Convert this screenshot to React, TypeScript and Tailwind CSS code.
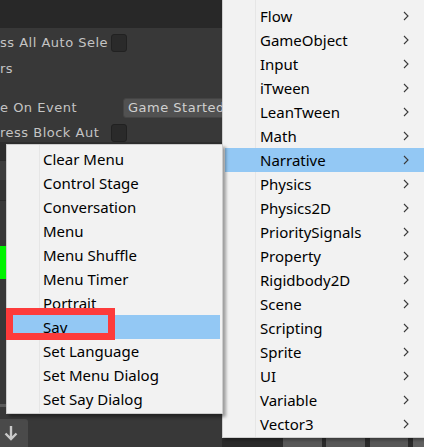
import React from "react";

const rightItems = [
  "Flow","GameObject","Input","iTween","LeanTween","Math","Narrative","Physics","Physics2D",
  "PrioritySignals","Property","Rigidbody2D","Scene","Scripting","Sprite","UI","Variable","Vector3",
];
const leftItems = [
  "Clear Menu","Control Stage","Conversation","Menu","Menu Shuffle","Menu Timer","Portrait","Say",
  "Set Language","Set Menu Dialog","Set Say Dialog",
];

const Chevron = () => (
  <svg width="6" height="10" viewBox="0 0 6 10" className="shrink-0">
    <path d="M1 1 L5 5 L1 9" fill="none" stroke="#3a3a3a" strokeWidth="1.1" />
  </svg>
);

const Checkbox = () => (
  <div className="w-[16px] h-[18px] rounded-[3px] bg-[#2a2a2a] border border-[#212121]" />
);

export default function App() {
  const bgFont = { fontFamily: '"DejaVu Sans", Verdana, sans-serif' };
  const menuFont = { fontFamily: '"Noto Sans", "Noto Sans CJK SC", sans-serif' };
  return (
    <div className="relative w-[424px] h-[447px] overflow-hidden bg-[#383838]">
      {/* background inspector */}
      <div className="flex flex-col text-[13px] tracking-[0.5px] text-[#c4c4c4]" style={bgFont}>
        <div className="h-[28px] bg-[#282828]" />
        <div className="flex items-center h-[18px] mt-[6px] whitespace-nowrap">
          <span className="w-[111px]">ss All Auto Sele</span>
          <Checkbox />
        </div>
        <div className="flex items-center h-[18px] mt-[8px]">
          <span>rs</span>
        </div>
        <div className="flex items-center h-[20px] mt-[20px] whitespace-nowrap">
          <span className="w-[123px]">e On Event</span>
          <div className="w-[110px] h-[20px] rounded-[3px] bg-[#515151] border border-[#444] flex items-center pl-[4px] text-[#d0d0d0]">
            Game Started
          </div>
        </div>
        <div className="flex items-center h-[18px] mt-[6px] whitespace-nowrap">
          <span className="w-[111px]">ress Block Aut</span>
          <Checkbox />
        </div>
        {/* left strip pieces (mostly hidden under menu) */}
        <div className="h-[18px] bg-[#2e2e2e]" />
        <div className="h-[20px] bg-[#3c3c3c] border-t border-[#2a2a2a]" />
        <div className="h-[20px] bg-[#353535]" />
        <div className="h-[22px] bg-[#383838] border-t border-[#2a2a2a]" />
        <div className="h-[24px]" />
        <div className="h-[33px] w-[60px] bg-[#00f400]" />
        <div className="h-[125px]" />
        <div className="h-[3px] bg-[#5a5a5a]" />
        <div className="h-[12px]" />
        <div className="flex">
          <div className="w-[34px] h-[28px] -ml-[6px] bg-[#4a4a4a] rounded-tr-[3px] flex items-center justify-center">
            <svg width="16" height="18" viewBox="0 0 16 18">
              <path d="M8 2 V15 M2.5 9.5 L8 15 L13.5 9.5" fill="none" stroke="#c9c9c9" strokeWidth="2.4" />
            </svg>
          </div>
        </div>
      </div>

      {/* bottom right toolbar under right menu */}
      <div className="absolute left-[222px] bottom-0 h-[10px] w-[202px] flex bg-[#2b2b2b]">
        <div className="w-[61px]" />
        <div className="w-[39px] bg-[#585858]" />
        <div className="w-[4px]" />
        <div className="w-[39px] bg-[#585858]" />
        <div className="w-[5px]" />
        <div className="w-[38px] bg-[#585858]" />
        <div className="w-[5px]" />
        <div className="flex-1 bg-[#606060]" />
      </div>

      {/* right menu */}
      <div
        className="absolute left-[222px] top-0 w-[204px] h-[438px] bg-[#f2f2f2] border-l border-b border-[#cfcfcf] pt-[4px] shadow-[2px_2px_3px_rgba(0,0,0,0.35)]"
        style={menuFont}
      >
        <div className="absolute left-[32px] top-0 bottom-0 w-px bg-[#e6e6e6]" />
        {rightItems.map((t) => (
          <div
            key={t}
            className={`relative flex items-center h-[24px] mx-[2px] pl-[35px] pr-[15px] text-[15px] text-black ${
              t === "Narrative" ? "bg-[#93c8f4]" : ""
            }`}
          >
            <span className="flex-1 leading-none">{t}</span>
            <Chevron />
          </div>
        ))}
      </div>

      {/* left menu */}
      <div
        className="absolute left-[6px] top-[144px] w-[217px] h-[270px] bg-[#f2f2f2] border border-[#cdcdcd] pt-[2px] shadow-[3px_3px_3px_rgba(0,0,0,0.35)]"
        style={menuFont}
      >
        <div className="absolute left-[32px] top-0 bottom-0 w-px bg-[#e6e6e6]" />
        {leftItems.map((t) => (
          <div
            key={t}
            className={`relative flex items-center h-[24px] mx-[2px] pl-[34px] text-[15px] text-black ${
              t === "Say" ? "bg-[#93c8f4]" : ""
            }`}
          >
            <span className="leading-none">{t}</span>
          </div>
        ))}
      </div>

      {/* red annotation box */}
      <div className="absolute left-[6px] top-[308px] w-[109px] h-[32px] border-[7px] border-[#fd3b3b]" />
    </div>
  );
}
